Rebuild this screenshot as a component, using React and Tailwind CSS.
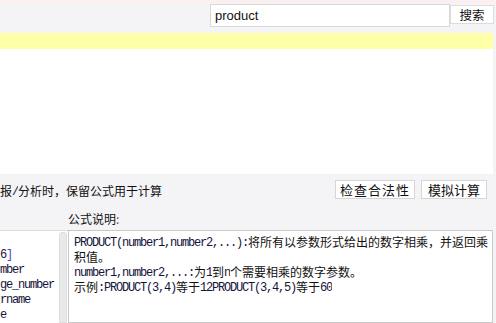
const cjk = '"Noto Sans CJK SC", "Noto Sans", sans-serif'

// splits a string into ascii runs (mono, SimSun-like half width) and CJK runs;
// the mono run gets a taller leading so its baseline lines up with the CJK one
function Mixed({ text }) {
  const parts = text.split(/([\x00-\x7f]+)/).filter(Boolean)
  return parts.map((p, i) =>
    /^[\x00-\x7f]+$/.test(p) ? (
      <span key={i} className="inline-block align-top h-[15px] leading-[19px] overflow-hidden font-['Liberation_Mono',monospace] text-[12px] tracking-[-1.2px] text-[#14143a]">{p}</span>
    ) : (
      <span key={i} className="inline-block align-top h-[15px] leading-[15px] overflow-hidden font-['Noto_Sans_CJK_SC',sans-serif] text-[12px] text-[#111]">{p}</span>
    )
  )
}

const descLines = [
  'PRODUCT(number1,number2,...):将所有以参数形式给出的数字相乘，并返回乘',
  '积值。',
  'number1,number2,...:为1到n个需要相乘的数字参数。',
  '示例:PRODUCT(3,4)等于12PRODUCT(3,4,5)等于60',
]

export default function App() {
  return (
    <div className="w-[496px] h-[323px] overflow-hidden bg-[#f4f4f6] flex flex-col" style={{ fontFamily: cjk }}>
      {/* top strip */}
      <div className="h-[3px] bg-[#fcefef]" />

      {/* search bar */}
      <div className="h-[30px] flex items-center justify-end pr-[2px]">
        <div className="w-[240px] h-[23px] bg-white border border-[#d9d9d9] flex items-center pl-[4px] -mt-[4px]">
          <span className="text-[13px] text-[#111] font-['Liberation_Sans',sans-serif]">product</span>
        </div>
        <button className="w-[44px] h-[19px] bg-white border border-[#dcdcdc] text-[12.5px] leading-none text-[#111] flex items-center justify-center -mt-[6px]">
          搜索
        </button>
      </div>

      {/* yellow notice band */}
      <div className="h-[16px] bg-[#ffffa8] mr-[3px]" />

      {/* editor area */}
      <div className="h-[126px] bg-white mr-[3px]" />

      {/* options + buttons */}
      <div className="h-[30px] flex items-center justify-between pr-[9px]">
        <div className="whitespace-nowrap h-[15px] leading-[15px] mt-[3px]">
          <Mixed text="报/分析时，保留公式用于计算" />
        </div>
        <div className="flex gap-[6px]">
          <button className="w-[80px] h-[19px] bg-white border border-[#d6d6d6] text-[13px] leading-none text-[#111] flex items-center justify-center tracking-[1px]">
            检查合法性
          </button>
          <button className="w-[66px] h-[19px] bg-white border border-[#d6d6d6] text-[13px] leading-none text-[#111] flex items-center justify-center">
            模拟计算
          </button>
        </div>
      </div>

      <div className="h-[26px] flex items-center pl-[68px] pt-[3px] text-[12px] text-[#111]">
        公式说明<span className="text-[#5a4a8a]">:</span>
      </div>

      {/* bottom panels */}
      <div className="flex-1 flex mr-[3px]">
        <div className="w-[68px] flex pr-[1px] bg-white border-t border-[#dcdcdc]">
          <div className="flex-1 overflow-hidden pt-[17px] leading-[15px] whitespace-nowrap font-['Liberation_Mono',monospace] text-[12px] tracking-[-1.2px] text-[#14143a]">
            <div>6<span className="text-[#5b3fd0]">]</span></div>
            <div>mber</div>
            <div>ge_number</div>
            <div>rname</div>
            <div>e</div>
          </div>
          <div className="w-[8px] bg-[#e9e9e9] border border-[#dedede] rounded-t-[3px] mt-[1px]" />
        </div>
        <div className="flex-1 bg-white border border-[#c9c9c9] pt-[3px] pl-[5px]">
          {descLines.map((l, i) => (
            <div key={i} className="whitespace-nowrap leading-[15px] h-[15px] flex">
              <Mixed text={l} />
            </div>
          ))}
        </div>
      </div>
    </div>
  )
}
